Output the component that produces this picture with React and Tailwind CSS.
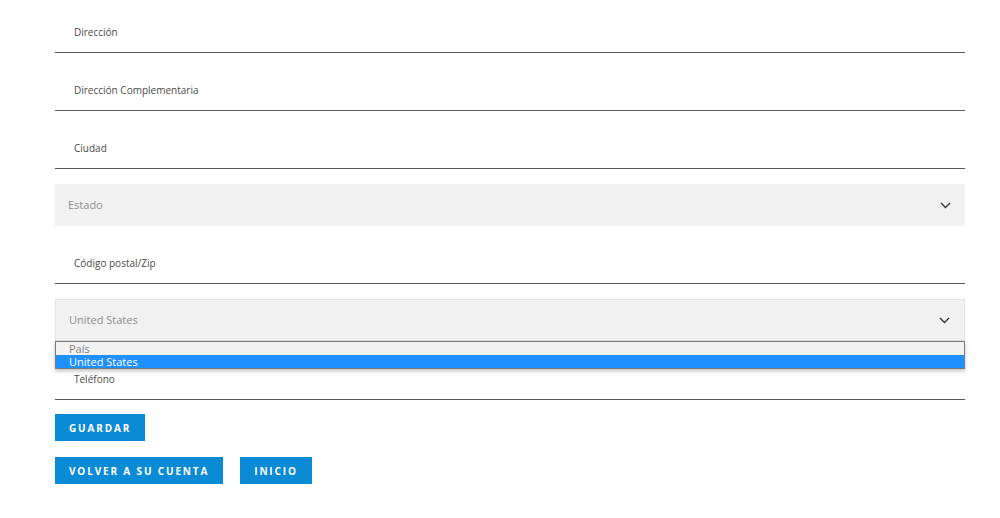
import React from "react";

function TextField({ label, h }) {
  return (
    <div className={`${h} flex items-end border-b border-[#595959] pb-[14px] pl-[19px]`}>
      <span className="text-[10px] leading-[12px] text-[#4a4a4a]">{label}</span>
    </div>
  );
}

function Chevron() {
  return (
    <svg width="11" height="7" viewBox="0 0 11 7" fill="none" className="mr-[14px]">
      <path d="M1 1l4.5 4.5L10 1" stroke="#333" strokeWidth="1.4" />
    </svg>
  );
}

function SelectBox({ value, bordered }) {
  return (
    <div
      className={`h-[42px] flex items-center justify-between bg-[#f1f1f1] pl-[13px] ${
        bordered ? "border border-[#e2e2e2]" : ""
      }`}
    >
      <span className="text-[11px] text-[#8e8e8e]">{value}</span>
      <Chevron />
    </div>
  );
}

function Btn({ children }) {
  return (
    <button className="flex h-[27px] items-center bg-[#0b8ad6] px-[14px] text-[10px] leading-[12px] font-bold tracking-[1.85px] text-white">
      {children}
    </button>
  );
}

export default function App() {
  return (
    <div className="w-[1000px] h-[518px] bg-white overflow-hidden" style={{ fontFamily: '"Open Sans", "Noto Sans", sans-serif' }}>
      <div className="ml-[55px] w-[910px]">
        <TextField label="Dirección" h="h-[53px]" />
        <TextField label="Dirección Complementaria" h="h-[58px]" />
        <TextField label="Ciudad" h="h-[58px]" />
        <div className="mt-[15px]">
          <SelectBox value="Estado" />
        </div>
        <TextField label="Código postal/Zip" h="h-[58px]" />
        <div className="mt-[15px]">
          <SelectBox value="United States" bordered />
        </div>
        <div className="relative">
          <div className="absolute left-0 top-0 z-10 w-[910px] border border-[#7a7a7a] bg-white shadow-[0_2px_4px_rgba(0,0,0,0.25)]">
            <div className="h-[13px] bg-[#f2f2f2] pl-[13px] text-[11px] leading-[13px] text-[#808080]">País</div>
            <div className="h-[13px] bg-[#1e90ff] pl-[13px] text-[11px] leading-[13px] text-white">United States</div>
          </div>
          <TextField label="Teléfono" h="h-[59px]" />
        </div>
        <div className="mt-[14px] flex">
          <Btn>GUARDAR</Btn>
        </div>
        <div className="mt-[16px] flex gap-[17px]">
          <Btn>VOLVER A SU CUENTA</Btn>
          <Btn>INICIO</Btn>
        </div>
      </div>
    </div>
  );
}
